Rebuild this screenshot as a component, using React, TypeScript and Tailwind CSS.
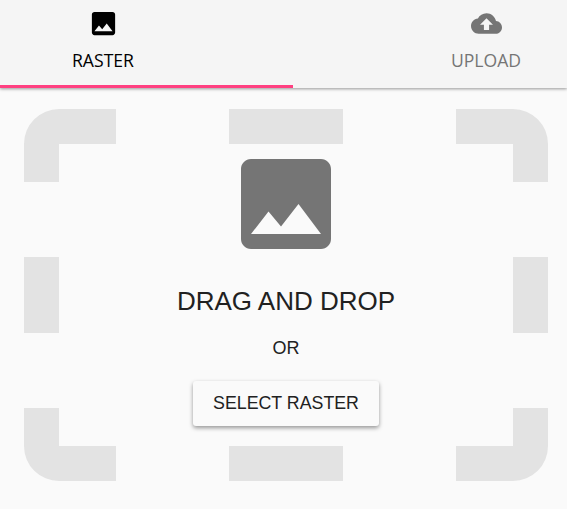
const imagePath =
  'M21 19V5c0-1.1-.9-2-2-2H5c-1.1 0-2 .9-2 2v14c0 1.1.9 2 2 2h14c1.1 0 2-.9 2-2zM8.5 13.5l2.5 3.01L14.5 12l4.5 6H5l3.5-4.5z';
const cloudPath =
  'M19.35 10.04C18.67 6.59 15.64 4 12 4 9.11 4 6.6 5.64 5.35 8.04 2.34 8.36 0 10.91 0 14c0 3.31 2.69 6 6 6h13c2.76 0 5-2.24 5-5 0-2.64-2.05-4.78-4.65-4.96zM14 13v4h-4v-4H7l5-5 5 5h-3z';

function Icon({ d, className }: { d: string; className: string }) {
  return (
    <svg viewBox="0 0 24 24" fill="currentColor" className={className}>
      <path d={d} />
    </svg>
  );
}

// dashed outline of the drop zone
function DropFrame() {
  return (
    <svg
      className="absolute left-0 top-0 h-[421px] w-[567px]"
      viewBox="0 88 567 421"
      fill="#e3e3e3"
    >
      <path d="M116 109H59a35 35 0 0 0-35 35v38h35v-38h57z" />
      <path d="M229 109h114v35H229z" />
      <path d="M456 109h57a35 35 0 0 1 35 35v38h-35v-38h-57z" />
      <path d="M24 257h35v76H24z" />
      <path d="M513 257h35v76h-35z" />
      <path d="M116 481H59a35 35 0 0 1-35-35v-38h35v38h57z" />
      <path d="M229 446h114v35H229z" />
      <path d="M456 481h57a35 35 0 0 0 35-35v-38h-35v38h-57z" />
    </svg>
  );
}

export default function App() {
  return (
    <div className="h-[509px] w-[567px] overflow-hidden bg-[#fafafa] font-['Liberation_Sans',sans-serif]">
      {/* Tabs */}
      <div className="relative z-10 flex h-[88px] justify-between bg-[#f5f5f5] font-['Open_Sans',sans-serif] shadow-[0_1px_3px_rgba(0,0,0,0.4)]">
        <button className="flex w-[206px] flex-col items-center text-black">
          <Icon d={imagePath} className="mt-[8px] h-[31px] w-[31px]" />
          <span className="mt-[10px] text-[17.6px] leading-[22px]">RASTER</span>
        </button>
        <button className="mr-px flex w-[160px] flex-col items-center text-[#757575]">
          <Icon d={cloudPath} className="mt-[8px] h-[31px] w-[31px]" />
          <span className="mt-[10px] text-[17.6px] leading-[22px]">UPLOAD</span>
        </button>
        <div className="absolute bottom-0 left-0 h-[3px] w-[293px] bg-[#ff4081]" />
      </div>

      {/* Drop zone */}
      <div className="relative flex h-[421px] flex-col items-center pl-[5px] pt-[56px]">
        <DropFrame />
        <Icon d={imagePath} className="relative h-[120px] w-[120px] text-[#757575]" />
        <h2 className="relative mt-[21px] text-[26px] leading-[32px] text-[#212121]">
          DRAG AND DROP
        </h2>
        <p className="relative mt-[19px] text-lg leading-[24px] text-[#212121]">OR</p>
        <button className="relative mt-[21px] h-[45px] w-[186px] rounded-[3px] bg-[#fafafa] pb-px text-[17.8px] text-[#212121] shadow-[0_2px_4px_rgba(0,0,0,0.4)]">
          SELECT RASTER
        </button>
      </div>
    </div>
  );
}
